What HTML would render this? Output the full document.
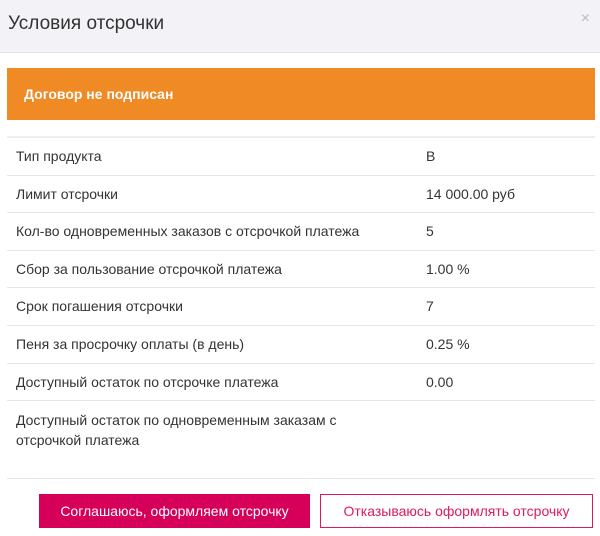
<!DOCTYPE html>
<html><head><meta charset="utf-8"><style>
body{margin:0;width:600px;height:536px;background:#fff;font-family:"Liberation Sans",sans-serif;color:#333;position:relative;overflow:hidden}
.hdr{position:absolute;left:0;top:0;width:600px;height:52px;background:#f2f2f7;border-bottom:1px solid #e2e2e8}
.hdr .t{position:absolute;left:8px;top:13px;font-size:19px;color:#333}
.hdr .x{position:absolute;right:10px;top:10px;font-size:16px;color:#bbb}
.or{position:absolute;left:7px;top:68px;width:588px;height:52px;background:#ef8a25;color:#fff;font-weight:bold;font-size:14px;line-height:52px;text-indent:17px}
.tb{position:absolute;left:7px;top:136px;width:588px;border-top:2px solid #eee}
.r{height:36.6px;border-bottom:1px solid #e5e5e5;position:relative;font-size:14px}
.r span{position:absolute;top:10px}
.r .l{left:9px}.r .v{left:419px}
.r.big{height:77px}.r.big .l{top:9px;line-height:20px;width:370px}
.b1{position:absolute;left:39px;top:494px;width:271px;height:34px;background:#d6005a;color:#fff;font-size:14px;text-align:center;line-height:34px}
.b2{position:absolute;left:320px;top:494px;width:271px;height:32px;border:1px solid #e0195e;color:#e0195e;font-size:14px;text-align:center;line-height:32px}
</style></head><body>
<div class="hdr"><div class="t">Условия отсрочки</div><div class="x">×</div></div>
<div class="or">Договор не подписан</div>
<div class="tb">
<div class="r"><span class="l">Тип продукта</span><span class="v">B</span></div>
<div class="r"><span class="l">Лимит отсрочки</span><span class="v">14 000.00 руб</span></div>
<div class="r"><span class="l">Кол-во одновременных заказов с отсрочкой платежа</span><span class="v">5</span></div>
<div class="r"><span class="l">Сбор за пользование отсрочкой платежа</span><span class="v">1.00 %</span></div>
<div class="r"><span class="l">Срок погашения отсрочки</span><span class="v">7</span></div>
<div class="r"><span class="l">Пеня за просрочку оплаты (в день)</span><span class="v">0.25 %</span></div>
<div class="r"><span class="l">Доступный остаток по отсрочке платежа</span><span class="v">0.00</span></div>
<div class="r big"><span class="l">Доступный остаток по одновременным заказам с отсрочкой платежа</span></div>
</div>
<div class="b1">Соглашаюсь, оформляем отсрочку</div>
<div class="b2">Отказываюсь оформлять отсрочку</div>
</body></html>
